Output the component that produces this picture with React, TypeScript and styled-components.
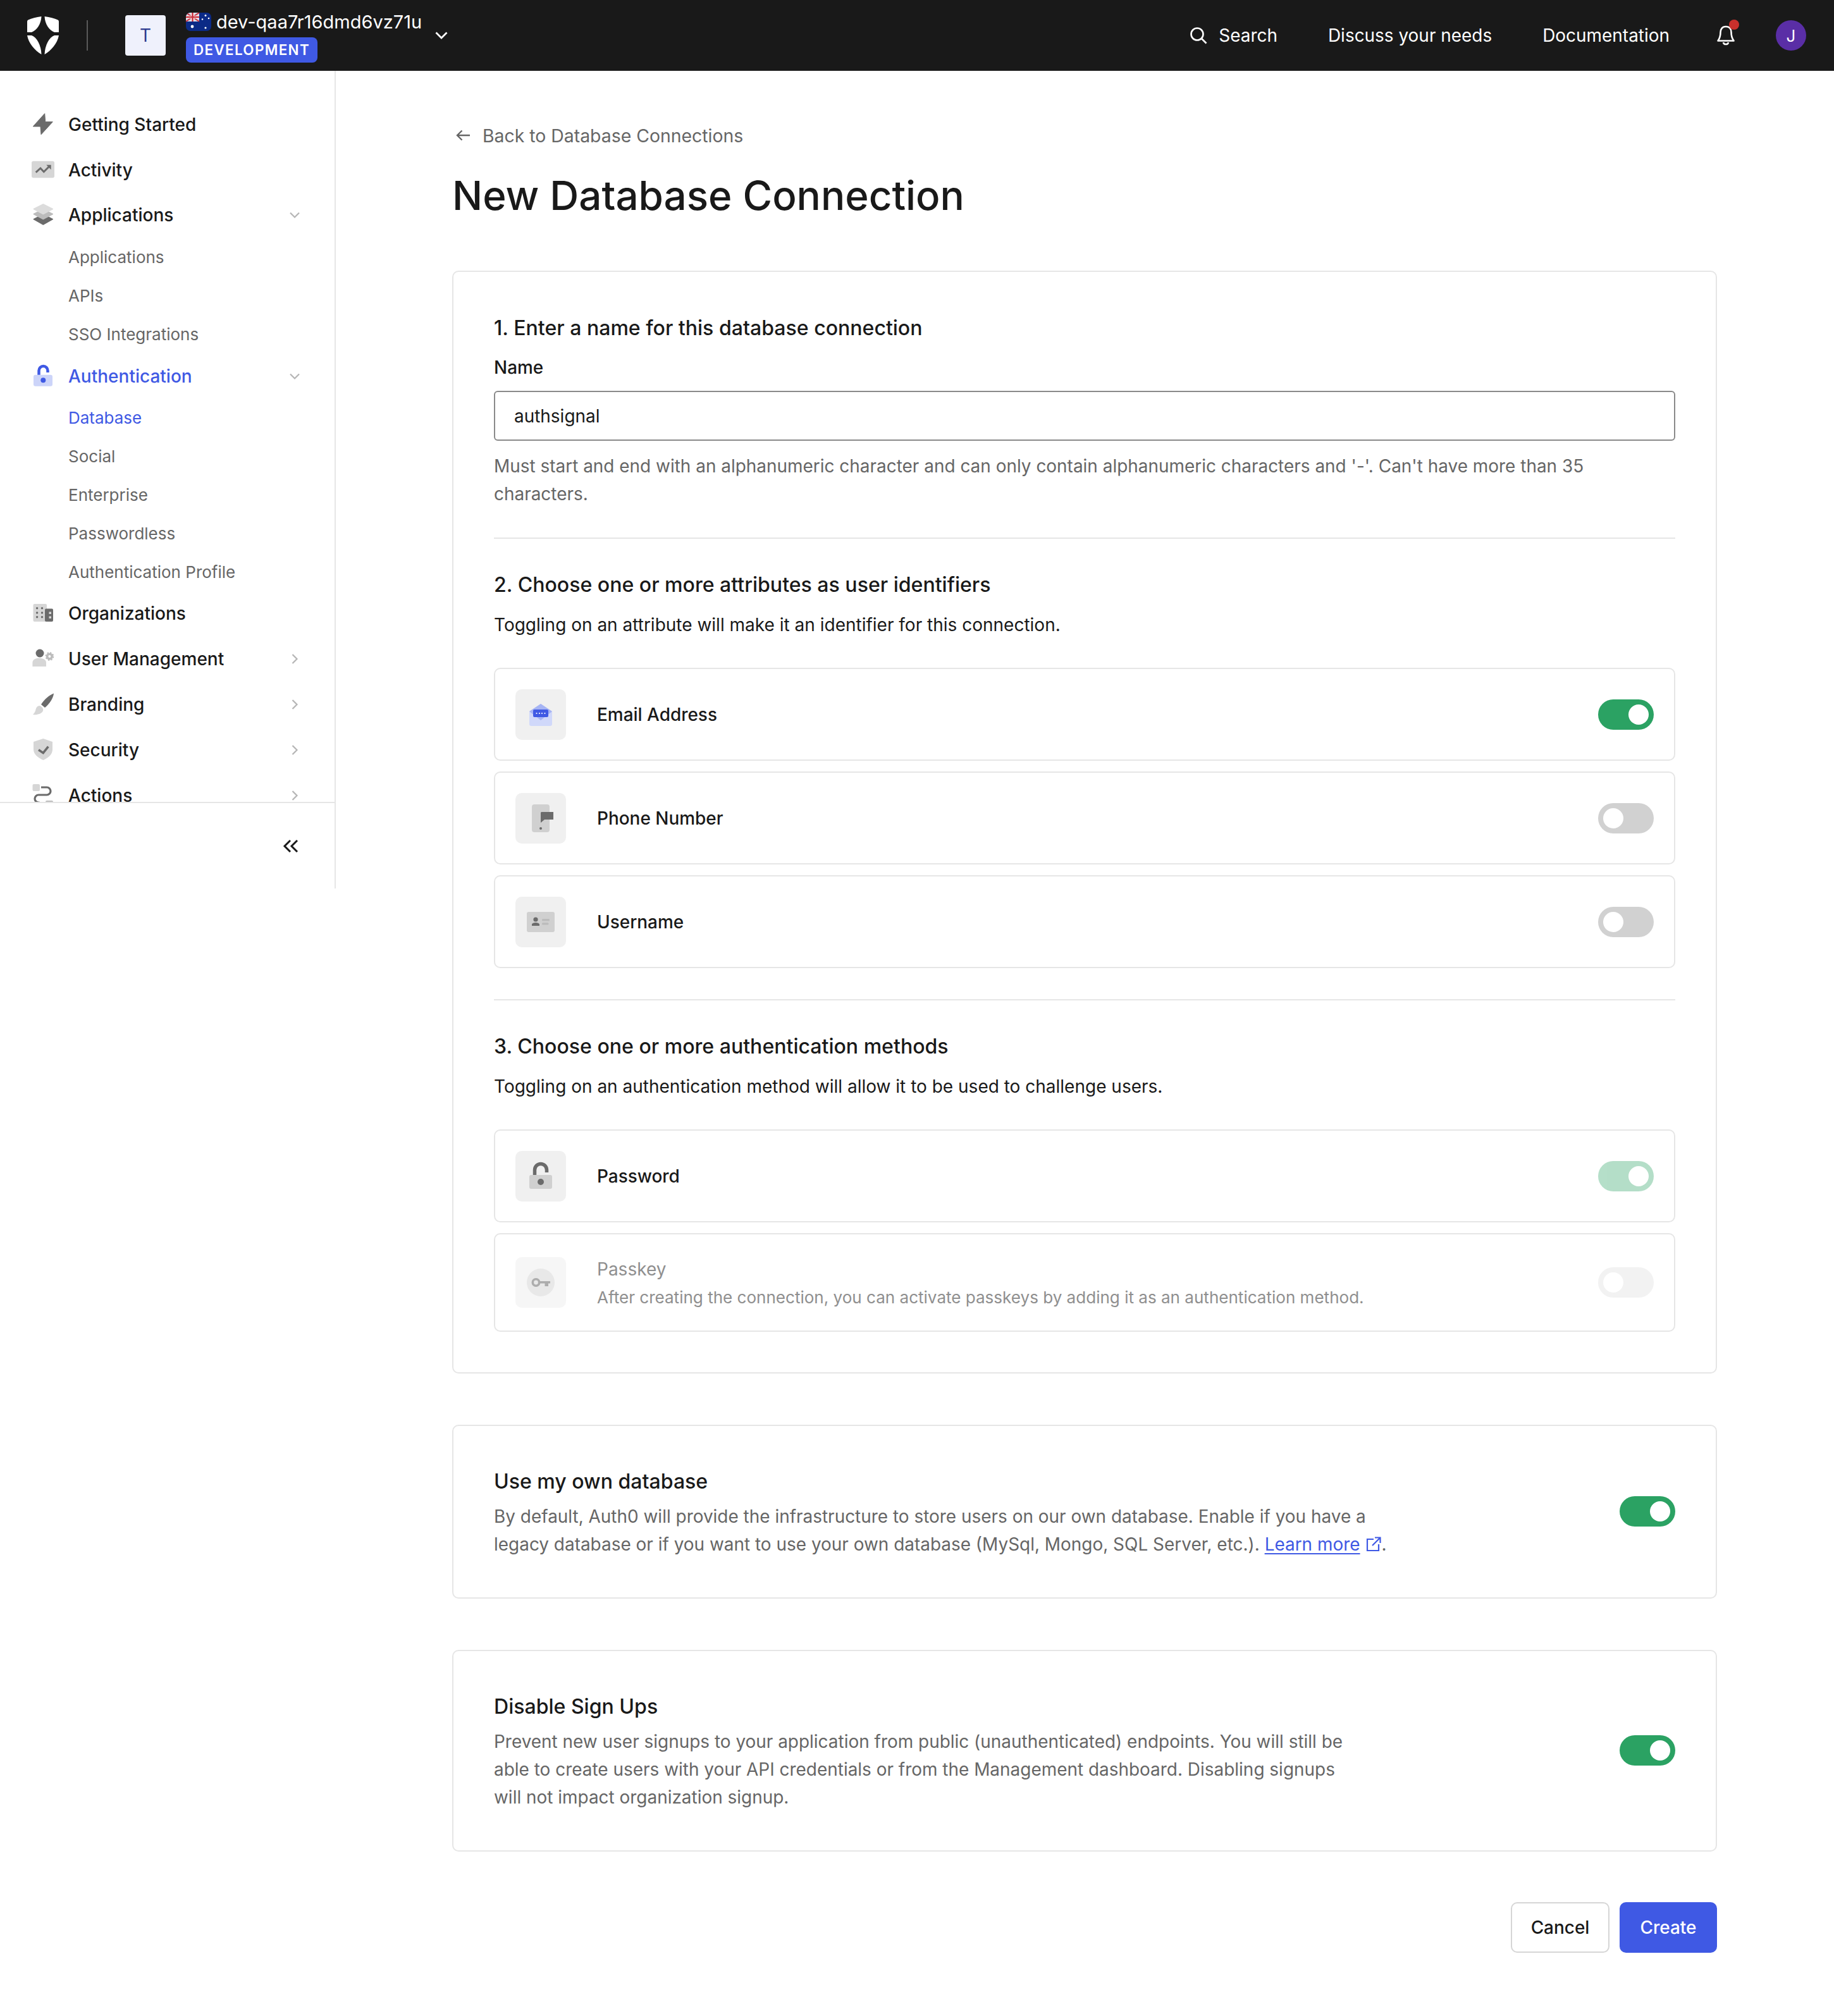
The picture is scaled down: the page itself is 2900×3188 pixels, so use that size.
import React from "react";
import styled, { createGlobalStyle } from "styled-components";

const F14 = "27.95px";
const F13 = "26.05px";
const F16 = "32.05px";

const Global = createGlobalStyle`
  html, body { margin: 0; padding: 0; background: #fff; }
  body {
    font-family: Inter, "Noto Sans", "Liberation Sans", sans-serif;
    color: #191919;
    -webkit-font-smoothing: antialiased;
  }
  * { box-sizing: border-box; }
`;

/* ---------- top bar ---------- */
const TopBar = styled.header`
  height: 112px;
  background: #191919;
  display: flex;
  align-items: center;
  padding-left: 43px;
  color: #fff;
`;
const LogoSvg = styled.svg`
  width: 50px;
  height: 60px;
  fill: #fff;
  flex: none;
`;
const BarDivider = styled.span`
  width: 2px;
  height: 48px;
  background: #5a5a5a;
  margin: 0 59px 0 44px;
  flex: none;
`;
const TenantTile = styled.span`
  width: 64px;
  height: 64px;
  border-radius: 4px;
  background: #eff1fc;
  color: #2c3a8f;
  font-size: ${F14};
  display: flex;
  align-items: center;
  justify-content: center;
  margin-right: 32px;
  flex: none;
`;
const TenantBlock = styled.div`
  display: flex;
  flex-direction: column;
  gap: 10px;
  align-items: flex-start;
  margin-top: 6px;
`;
const TenantNameRow = styled.div`
  display: flex;
  align-items: center;
  gap: 8px;
  height: 29px;
  font-size: 29px;
  line-height: 29px;
  white-space: nowrap;
`;
const FlagSvg = styled.svg`
  width: 40px;
  height: 29px;
  flex: none;
`;
const EnvBadge = styled.span`
  height: 40px;
  padding: 0 12px;
  background: #3f59e4;
  border-radius: 8px;
  font-size: 22.4px;
  font-weight: 600;
  letter-spacing: 1.35px;
  line-height: 40px;
`;
const TenantChevron = styled.svg`
  width: 20px;
  height: 12px;
  margin-left: 21px;
  flex: none;
`;
const BarRight = styled.nav`
  margin-left: auto;
  display: flex;
  align-items: center;
  font-size: ${F14};
`;
const SearchLink = styled.span`
  display: flex;
  align-items: center;
  gap: 18px;
  margin-right: 80px;
`;
const BarLink = styled.span`
  margin-right: 80px;
  white-space: nowrap;
`;
const BellWrap = styled.span`
  position: relative;
  width: 30px;
  height: 32px;
  margin: 0 64px 0 -6px;
  display: block;
`;
const BellDot = styled.span`
  position: absolute;
  right: -6px;
  top: -9px;
  width: 16px;
  height: 16px;
  border-radius: 50%;
  background: #c9302c;
`;
const Avatar = styled.span`
  width: 48px;
  height: 48px;
  border-radius: 50%;
  background: #5a2ea6;
  display: flex;
  align-items: center;
  justify-content: center;
  font-size: 26px;
  margin-right: 44px;
  position: relative;
`;

/* ---------- layout ---------- */
const Shell = styled.div`
  display: flex;
  align-items: flex-start;
`;
const Sidebar = styled.aside`
  width: 531px;
  height: 1293px;
  border-right: 2px solid #e6e6e6;
  display: flex;
  flex-direction: column;
  flex: none;
`;
const NavScroll = styled.nav`
  height: 1156px;
  overflow: hidden;
  padding-top: 49px;
`;
const NavRow = styled.div<{ $active?: boolean }>`
  height: 71.8px;
  display: flex;
  align-items: center;
  padding-left: 50px;
  font-size: 28px;
  font-weight: 500;
  color: ${(p) => (p.$active ? "#3f59e4" : "#191919")};
`;
const NavIcon = styled.svg`
  width: 36px;
  height: 36px;
  margin-right: 22px;
  flex: none;
  overflow: visible;
`;
const NavCaret = styled.svg`
  width: 20px;
  height: 20px;
  margin-left: auto;
  margin-right: 53px;
  flex: none;
`;
const SubRow = styled.div<{ $active?: boolean }>`
  height: 60.8px;
  display: flex;
  align-items: center;
  padding-left: 108px;
  font-size: 26px;
  color: ${(p) => (p.$active ? "#3f59e4" : "#666666")};
`;
const CollapseBar = styled.div`
  flex: 1;
  border-top: 2px solid #e6e6e6;
  display: flex;
  align-items: center;
  justify-content: flex-end;
  padding-right: 56px;
`;
const CollapseIcon = styled.svg`
  width: 26px;
  height: 22px;
`;

const Main = styled.main`
  width: 2000px;
  margin-left: 184px;
  padding: 82px 0 100px;
`;
const BackLink = styled.div`
  height: 40px;
  display: flex;
  align-items: center;
  gap: 20px;
  padding-left: 6px;
  font-size: 28.4px;
  color: #666666;
`;
const BackIcon = styled.svg`
  width: 22px;
  height: 18px;
`;
const PageTitle = styled.h1`
  margin: 35px 0 79px;
  height: 80px;
  line-height: 80px;
  font-size: 63.7px;
  font-weight: 500;
`;
const Card = styled.section`
  border: 2px solid #e6e6e6;
  border-radius: 10px;
  padding: 67px 64px 64px;
  margin-bottom: 81px;
`;
const StepTitle = styled.h2<{ $mt?: number }>`
  margin: ${(p) => p.$mt ?? 0}px 0 0;
  height: 44px;
  line-height: 44px;
  font-size: ${F16};
  font-weight: 500;
`;
const FieldLabel = styled.label`
  display: block;
  margin-top: 20px;
  height: 40px;
  line-height: 40px;
  font-size: ${F14};
  font-weight: 500;
`;
const NameInput = styled.input`
  display: block;
  width: 100%;
  height: 79px;
  margin-top: 17px;
  border: 2px solid #8a8a8a;
  border-radius: 6px;
  padding: 0 30px;
  font: inherit;
  font-size: ${F14};
  color: #191919;
  background: #fff;
`;
const HelpText = styled.p`
  margin: 18px 0 0;
  font-size: ${F14};
  line-height: 44px;
  color: #666666;
`;
const Rule = styled.hr<{ $mt: number }>`
  margin: ${(p) => p.$mt}px 0 0;
  border: 0;
  height: 2px;
  background: #e6e6e6;
`;
const StepDesc = styled.p`
  margin: 21px 0 48px;
  height: 40px;
  line-height: 40px;
  font-size: 28px;
`;
const OptionList = styled.div`
  display: flex;
  flex-direction: column;
  gap: 17px;
`;
const OptionRow = styled.div<{ $tall?: boolean }>`
  height: ${(p) => (p.$tall ? 156 : 147)}px;
  border: 2px solid #e6e6e6;
  border-radius: 10px;
  padding: 0 32px;
  display: flex;
  align-items: center;
`;
const OptionIcon = styled.svg<{ $dim?: boolean }>`
  width: 80px;
  height: 80px;
  margin-right: 49px;
  flex: none;
  opacity: ${(p) => (p.$dim ? 0.55 : 1)};
`;
const OptionLabel = styled.span`
  font-size: ${F14};
  font-weight: 500;
`;
const OptionStack = styled.div`
  display: flex;
  flex-direction: column;
  gap: 7px;
  margin-top: 2px;
`;
const DimLabel = styled.span`
  font-size: 28px;
  line-height: 38px;
  color: #8f8f8f;
`;
const DimText = styled.span`
  font-size: ${F13};
  line-height: 38px;
  color: #8f8f8f;
`;
const ToggleTrack = styled.span<{ $on?: boolean; $level?: number; $lift?: number }>`
  margin-left: auto;
  margin-bottom: ${(p) => p.$lift ?? 0}px;
  width: 88px;
  height: 48px;
  border-radius: 24px;
  flex: none;
  display: flex;
  align-items: center;
  padding: 0 8px;
  justify-content: ${(p) => (p.$on ? "flex-end" : "flex-start")};
  background: ${(p) => (p.$on ? "#2ba263" : "#d1d1d1")};
  opacity: ${(p) => p.$level ?? 1};
`;
const ToggleKnob = styled.span`
  width: 32px;
  height: 32px;
  border-radius: 50%;
  background: #fff;
`;
const FlatCard = styled.section`
  border: 2px solid #e6e6e6;
  border-radius: 10px;
  padding: 66px 64px 62px;
  margin-bottom: 81px;
  display: flex;
  align-items: center;
`;
const FlatText = styled.div`
  width: 1395px;
`;
const FlatTitle = styled.h2`
  margin: 0 0 11px;
  height: 44px;
  line-height: 44px;
  font-size: ${F16};
  font-weight: 500;
`;
const FlatBody = styled.p`
  margin: 0;
  font-size: ${F14};
  line-height: 44px;
  color: #666666;
  white-space: nowrap;
`;
const LearnLink = styled.a`
  color: #3f59e4;
  text-decoration: underline;
  text-underline-offset: 4px;
`;
const ExternalIcon = styled.svg`
  width: 26px;
  height: 26px;
  margin-left: 8px;
  vertical-align: -3px;
`;
const Actions = styled.div`
  display: flex;
  justify-content: flex-end;
  gap: 16px;
  margin-top: -1px;
`;
const CancelButton = styled.button`
  width: 156px;
  height: 80px;
  border: 2px solid #d6d6d6;
  border-radius: 10px;
  background: #fff;
  color: #191919;
  font: inherit;
  font-size: ${F14};
  font-weight: 500;
`;
const CreateButton = styled.button`
  width: 154px;
  height: 80px;
  border: 0;
  border-radius: 10px;
  background: #3f59e4;
  color: #fff;
  font: inherit;
  font-size: ${F14};
  font-weight: 500;
`;

/* ---------- drawings ---------- */
const G1 = "#d6d6d6";
const G2 = "#6b6b6b";
const G3 = "#bcbcbc";

const Logo = () => (
  <LogoSvg viewBox="0 0 50 60">
    <path d="M22.5 0C14 1 7 3 1.5 5.5Q0 6 0 8V25H7C15 22 22 12 22.5 0Z" />
    <path d="M27.5 0C36 1 43 3 48.5 5.5Q50 6 50 8V25H43C35 22 28 12 27.5 0Z" />
    <path d="M0 30H7C15 33 22 45 22.5 60C12 54 2 42 0 30Z" />
    <path d="M50 30H43C35 33 28 45 27.5 60C38 54 48 42 50 30Z" />
  </LogoSvg>
);

const Flag = () => (
  <FlagSvg viewBox="0 0 40 29">
    <defs>
      <clipPath id="flagClip">
        <rect width="40" height="29" rx="7" />
      </clipPath>
    </defs>
    <g clipPath="url(#flagClip)">
      <rect width="40" height="29" fill="#0b2a86" />
      <rect width="21" height="14" fill="#d9dbe8" />
      <path d="M0 0L21 14M21 0L0 14" stroke="#c8313e" strokeWidth="2" />
      <path d="M10.5 0V14M0 7H21" stroke="#fff" strokeWidth="4.5" />
      <path d="M10.5 0V14M0 7H21" stroke="#c8313e" strokeWidth="2.6" />
      <g fill="#fff">
        <circle cx="10" cy="22" r="2.4" />
        <circle cx="31" cy="4.5" r="1.5" />
        <circle cx="26" cy="10.5" r="1.3" />
        <circle cx="36" cy="9" r="1.3" />
        <circle cx="31" cy="24" r="1.6" />
      </g>
    </g>
  </FlagSvg>
);

const navIcons: Record<string, React.ReactNode> = {
  bolt: (
    <path
      d="M20.7 .6L2.3 21H14L15 33.7L33.3 13.7H21.7Z"
      fill={G2}
      stroke={G2}
      strokeWidth="1"
      strokeLinejoin="round"
    />
  ),
  activity: (
    <>
      <rect x="0" y="3.7" width="36" height="26.6" rx="3" fill={G1} />
      <path d="M6.7 21.7L14 15L19.3 20.7L29 11" fill="none" stroke={G2} strokeWidth="3" />
      <path d="M23.3 9.7H30.7V17.3Z" fill={G2} />
    </>
  ),
  layers: (
    <g strokeLinejoin="round" strokeWidth="1.5">
      <path d="M18.3 17L3.3 24.7L18.3 33L33.3 24.7Z" fill={G2} stroke={G2} />
      <path d="M18.3 9L3.3 16.5L18.3 24.5L33.3 16.5Z" fill={G3} stroke={G3} />
      <path d="M18.3 1L3.3 8.5L18.3 16.5L33.3 8.5Z" fill="#dcdcdc" stroke="#dcdcdc" />
    </g>
  ),
  lock: (
    <>
      <rect x="3" y="15.7" width="30" height="18" rx="3" fill="#ccd4f9" />
      <path d="M11.5 15.7V9a7 7 0 0 1 14 0V12" fill="none" stroke="#3f59e4" strokeWidth="4.5" />
      <circle cx="18.3" cy="24.3" r="4" fill="#3f59e4" />
    </>
  ),
  org: (
    <>
      <rect x="2.5" y="3" width="21.5" height="28" rx="2" fill={G1} />
      <rect x="21" y="10.5" width="13" height="20.5" rx="2" fill={G2} />
      <g fill={G2}>
        <circle cx="8.6" cy="9.7" r="1.7" />
        <circle cx="16.5" cy="9.7" r="1.7" />
        <circle cx="8.6" cy="17" r="1.7" />
        <circle cx="16.5" cy="17" r="1.7" />
        <circle cx="8.6" cy="23.7" r="1.7" />
        <circle cx="16.5" cy="23.7" r="1.7" />
      </g>
      <rect x="27.5" y="15.5" width="3.5" height="3.5" fill={G1} />
      <rect x="27.5" y="22.5" width="3.5" height="3.5" fill={G1} />
    </>
  ),
  users: (
    <>
      <circle cx="13" cy="9" r="6.5" fill={G2} />
      <path d="M1.4 30V24C1.4 19 6 16.7 12 16.7S23 19 23 24V30Z" fill={G1} />
      <circle cx="28.4" cy="14" r="3.8" fill="none" stroke={G3} strokeWidth="3.6" />
      <circle cx="28.4" cy="14" r="6" fill="none" stroke={G3} strokeWidth="1.8" strokeDasharray="2.4 2.3" />
    </>
  ),
  brush: (
    <>
      <path d="M35 .5C28 3 20 10 15 18L21 23C28 17 34 9 35 .5Z" fill={G2} />
      <path d="M13 20C8 20 7 24 6 28C5 31 3 33 2 34C8 35 16 33 18 28C19 25 17 22 13 20Z" fill={G1} />
    </>
  ),
  shield: (
    <>
      <path d="M18.3 0L33 5V17C33 25 27 30 18.3 34C10 30 3 25 3 17V5Z" fill={G1} />
      <path d="M11 17.7L18.3 22.7L26.3 12.7" fill="none" stroke={G2} strokeWidth="3.5" />
    </>
  ),
  actions: (
    <>
      <rect x="1.5" y="0" width="11.5" height="11" rx="2" fill={G1} />
      <path d="M15 5H24a6 6 0 0 1 0 12H11a6 6 0 0 0 0 12V34" fill="none" stroke={G2} strokeWidth="3.2" />
      <rect x="22" y="26" width="12" height="9" rx="2" fill={G3} />
    </>
  ),
};

const Caret = ({ dir }: { dir: "down" | "right" }) => (
  <NavCaret viewBox="0 0 20 20">
    <path
      d={dir === "down" ? "M3 6.5L10 13.5L17 6.5" : "M6.5 3L13.5 10L6.5 17"}
      fill="none"
      stroke="#b5b5b5"
      strokeWidth="2.2"
    />
  </NavCaret>
);

type Nav = { label: string; icon: string; caret?: "down" | "right"; active?: boolean; subs?: string[]; activeSub?: string };
const nav: Nav[] = [
  { label: "Getting Started", icon: "bolt" },
  { label: "Activity", icon: "activity" },
  { label: "Applications", icon: "layers", caret: "down", subs: ["Applications", "APIs", "SSO Integrations"] },
  {
    label: "Authentication",
    icon: "lock",
    caret: "down",
    active: true,
    subs: ["Database", "Social", "Enterprise", "Passwordless", "Authentication Profile"],
    activeSub: "Database",
  },
  { label: "Organizations", icon: "org" },
  { label: "User Management", icon: "users", caret: "right" },
  { label: "Branding", icon: "brush", caret: "right" },
  { label: "Security", icon: "shield", caret: "right" },
  { label: "Actions", icon: "actions", caret: "right" },
];

const BOX = "#f0f0f0";
const optionIcons: Record<string, React.ReactNode> = {
  email: (
    <>
      <rect width="80" height="80" rx="10" fill={BOX} />
      <path d="M22 35L40 23L58 35V55a3 3 0 0 1-3 3H25a3 3 0 0 1-3-3Z" fill="#d0d8fa" />
      <path d="M22 35L40 23L58 35L40 49Z" fill="#a6b4f4" />
      <rect x="28" y="32" width="24" height="12" rx="2" fill="#3f59e4" />
      <g fill="#fff">
        <circle cx="33.5" cy="38" r="1.1" />
        <circle cx="38" cy="38" r="1.1" />
        <circle cx="42" cy="38" r="1.1" />
        <circle cx="46.5" cy="38" r="1.1" />
      </g>
    </>
  ),
  phone: (
    <>
      <rect width="80" height="80" rx="10" fill={BOX} />
      <rect x="26" y="18" width="28" height="44" rx="4" fill="#d0d0d0" />
      <path d="M41 30H60V42H46L40 47V31Z" fill={G2} />
      <circle cx="40" cy="56" r="2" fill={G2} />
    </>
  ),
  user: (
    <>
      <rect width="80" height="80" rx="10" fill={BOX} />
      <rect x="18" y="24" width="44" height="32" rx="3" fill="#d0d0d0" />
      <circle cx="32" cy="36" r="3.6" fill={G2} />
      <path d="M26 46V44C26 42 29 41 32 41S38 42 38 44V46Z" fill={G2} />
      <rect x="42" y="35" width="12" height="3.6" rx="1.5" fill={G3} />
      <rect x="42" y="41" width="10.5" height="3.6" rx="1.5" fill={G3} />
    </>
  ),
  password: (
    <>
      <rect width="80" height="80" rx="10" fill={BOX} />
      <rect x="22" y="38" width="36" height="22" rx="3" fill="#d0d0d0" />
      <path d="M30.5 38V30a9.5 9.5 0 0 1 19 0V34" fill="none" stroke={G2} strokeWidth="5.5" />
      <circle cx="40" cy="49" r="5" fill={G2} />
    </>
  ),
  passkey: (
    <>
      <rect width="80" height="80" rx="10" fill={BOX} />
      <circle cx="40" cy="40" r="22" fill="#d6d6d6" />
      <circle cx="32.5" cy="40" r="5.2" fill="none" stroke={G2} strokeWidth="3.6" />
      <path d="M38 38H55V41.5H52V46H46.5V41.5H38Z" fill={G2} />
    </>
  ),
};

const Toggle = ({ on, level, lift }: { on?: boolean; level?: number; lift?: number }) => (
  <ToggleTrack $on={on} $level={level} $lift={lift}>
    <ToggleKnob />
  </ToggleTrack>
);

const Option = ({ icon, label, on, level }: { icon: string; label: string; on?: boolean; level?: number }) => (
  <OptionRow>
    <OptionIcon viewBox="0 0 80 80">{optionIcons[icon]}</OptionIcon>
    <OptionLabel>{label}</OptionLabel>
    <Toggle on={on} level={level} />
  </OptionRow>
);

export default function App() {
  return (
    <>
      <Global />
      <TopBar>
        <Logo />
        <BarDivider />
        <TenantTile>T</TenantTile>
        <TenantBlock>
          <TenantNameRow>
            <Flag />
            dev-qaa7r16dmd6vz71u
          </TenantNameRow>
          <EnvBadge>DEVELOPMENT</EnvBadge>
        </TenantBlock>
        <TenantChevron viewBox="0 0 20 12">
          <path d="M1.5 1.5L10 10L18.5 1.5" fill="none" stroke="#fff" strokeWidth="2.8" />
        </TenantChevron>
        <BarRight>
          <SearchLink>
            <svg width="28" height="28" viewBox="0 0 28 28">
              <circle cx="12" cy="12" r="9.5" fill="none" stroke="#fff" strokeWidth="2.6" />
              <path d="M19 19L26.5 26.5" stroke="#fff" strokeWidth="2.6" />
            </svg>
            Search
          </SearchLink>
          <BarLink>Discuss your needs</BarLink>
          <BarLink>Documentation</BarLink>
          <BellWrap>
            <svg width="30" height="32" viewBox="0 0 30 32">
              <path
                d="M15 2C9 2 6.5 6.5 6.5 11C6.5 17 5 21 2.5 24.5H27.5C25 21 23.5 17 23.5 11C23.5 6.5 21 2 15 2Z"
                fill="none"
                stroke="#fff"
                strokeWidth="2.6"
                strokeLinejoin="round"
              />
              <path d="M11 27C11.5 31 18.5 31 19 27" fill="none" stroke="#fff" strokeWidth="2.6" />
            </svg>
            <BellDot />
          </BellWrap>
          <Avatar>J</Avatar>
        </BarRight>
      </TopBar>
      <Shell>
        <Sidebar>
          <NavScroll>
            {nav.map((n) => (
              <React.Fragment key={n.label}>
                <NavRow $active={n.active}>
                  <NavIcon viewBox="0 0 36 36">{navIcons[n.icon]}</NavIcon>
                  {n.label}
                  {n.caret && <Caret dir={n.caret} />}
                </NavRow>
                {n.subs?.map((s) => (
                  <SubRow key={s} $active={s === n.activeSub}>
                    {s}
                  </SubRow>
                ))}
              </React.Fragment>
            ))}
          </NavScroll>
          <CollapseBar>
            <CollapseIcon viewBox="0 0 26 22">
              <path d="M12 2L3 11L12 20M23 2L14 11L23 20" fill="none" stroke="#191919" strokeWidth="3" />
            </CollapseIcon>
          </CollapseBar>
        </Sidebar>
        <Main>
          <BackLink>
            <BackIcon viewBox="0 0 22 18">
              <path d="M9.5 1.5L2 9L9.5 16.5M2 9H22" fill="none" stroke="#666" strokeWidth="2.4" />
            </BackIcon>
            Back to Database Connections
          </BackLink>
          <PageTitle>New Database Connection</PageTitle>
          <Card>
            <StepTitle>1. Enter a name for this database connection</StepTitle>
            <FieldLabel>Name</FieldLabel>
            <NameInput defaultValue="authsignal" />
            <HelpText>
              Must start and end with an alphanumeric character and can only contain alphanumeric characters and '-'.
              Can't have more than 35 characters.
            </HelpText>
            <Rule $mt={47} />
            <StepTitle $mt={51}>2. Choose one or more attributes as user identifiers</StepTitle>
            <StepDesc>Toggling on an attribute will make it an identifier for this connection.</StepDesc>
            <OptionList>
              <Option icon="email" label="Email Address" on />
              <Option icon="phone" label="Phone Number" />
              <Option icon="user" label="Username" />
            </OptionList>
            <Rule $mt={49} />
            <StepTitle $mt={51}>3. Choose one or more authentication methods</StepTitle>
            <StepDesc>Toggling on an authentication method will allow it to be used to challenge users.</StepDesc>
            <OptionList>
              <Option icon="password" label="Password" on level={0.35} />
              <OptionRow $tall>
                <OptionIcon $dim viewBox="0 0 80 80">
                  {optionIcons.passkey}
                </OptionIcon>
                <OptionStack>
                  <DimLabel>Passkey</DimLabel>
                  <DimText>
                    After creating the connection, you can activate passkeys by adding it as an authentication method.
                  </DimText>
                </OptionStack>
                <Toggle level={0.28} />
              </OptionRow>
            </OptionList>
          </Card>
          <FlatCard>
            <FlatText>
              <FlatTitle>Use my own database</FlatTitle>
              <FlatBody>
                By default, Auth0 will provide the infrastructure to store users on our own database. Enable if you have a
                <br />
                legacy database or if you want to use your own database (MySql, Mongo, SQL Server, etc.).{" "}
                <LearnLink>Learn more</LearnLink>
                <ExternalIcon viewBox="0 0 26 26">
                  <path d="M13 5H3V23H21V13" fill="none" stroke="#3f59e4" strokeWidth="2.2" />
                  <path d="M11 15L23 3M15 2.5H23.5V11" fill="none" stroke="#3f59e4" strokeWidth="2.2" />
                </ExternalIcon>
                .
              </FlatBody>
            </FlatText>
            <Toggle on lift={6} />
          </FlatCard>
          <FlatCard>
            <FlatText>
              <FlatTitle>Disable Sign Ups</FlatTitle>
              <FlatBody>
                Prevent new user signups to your application from public (unauthenticated) endpoints. You will still be
                <br />
                able to create users with your API credentials or from the Management dashboard. Disabling signups
                <br />
                will not impact organization signup.
              </FlatBody>
            </FlatText>
            <Toggle on lift={6} />
          </FlatCard>
          <Actions>
            <CancelButton>Cancel</CancelButton>
            <CreateButton>Create</CreateButton>
          </Actions>
        </Main>
      </Shell>
    </>
  );
}
